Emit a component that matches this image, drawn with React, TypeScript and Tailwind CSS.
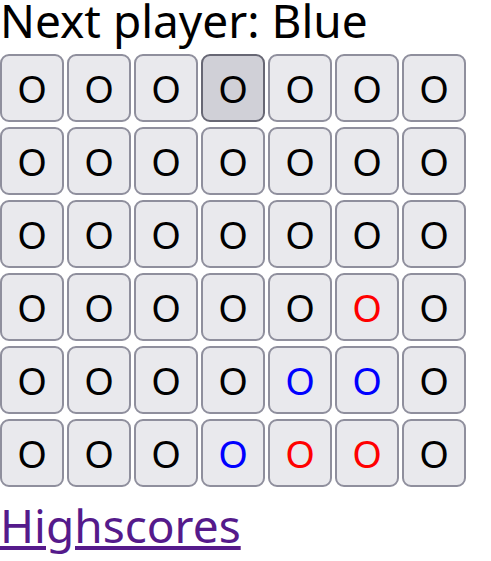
import React from 'react';

type Cell = 'none' | 'red' | 'blue';

const board: Cell[][] = [
  ['none', 'none', 'none', 'none', 'none', 'none', 'none'],
  ['none', 'none', 'none', 'none', 'none', 'none', 'none'],
  ['none', 'none', 'none', 'none', 'none', 'none', 'none'],
  ['none', 'none', 'none', 'none', 'none', 'red', 'none'],
  ['none', 'none', 'none', 'none', 'blue', 'blue', 'none'],
  ['none', 'none', 'none', 'blue', 'red', 'red', 'none'],
];

const colorClass: Record<Cell, string> = {
  none: 'text-black',
  red: 'text-[#ff0000]',
  blue: 'text-[#0000ff]',
};

export default function App() {
  return (
    <div className="bg-white min-h-screen font-['Noto_Sans',sans-serif]">
      <div className="text-[46px] leading-[40px] pb-[14px] text-black whitespace-nowrap">Next player: Blue</div>

      {/* Board */}
      <div className="flex flex-col gap-[5px]">
        {board.map((row, r) => (
          <div key={r} className="flex gap-[3px]">
            {row.map((cell, c) => {
              const hovered = r === 0 && c === 3;
              return (
                <button
                  key={c}
                  className={
                    'w-[64px] h-[68px] rounded-[9px] border-2 text-[38px] leading-none flex items-center justify-center ' +
                    (hovered ? 'bg-[#d0d0d7] border-[#676774] ' : 'bg-[#e9e9ed] border-[#8f8f9d] ') +
                    colorClass[cell]
                  }
                >
                  O
                </button>
              );
            })}
          </div>
        ))}
      </div>

      <a href="#highscores" className="inline-block mt-[8px] text-[46px] leading-[60px] text-[#551a8b] underline">
        Highscores
      </a>
    </div>
  );
}
